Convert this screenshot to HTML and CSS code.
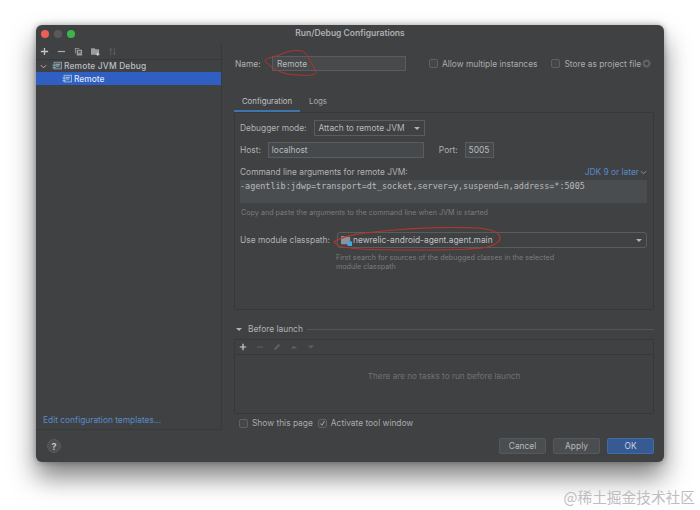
FILE: index.html
```html
<!DOCTYPE html>
<html lang="en">
<head>
<meta charset="utf-8">
<title>Run/Debug Configurations</title>
<link rel="stylesheet" href="styles.css">
</head>
<body>
<div class="window">
  <header class="titlebar">
    <div class="lights"><i class="light red"></i><i class="light grey"></i><i class="light green"></i></div>
    <div class="title">Run/Debug Configurations</div>
  </header>
  <div class="main">
    <aside class="sidebar">
      <div class="side-tools">
        <svg class="ic" viewBox="0 0 10 10"><path d="M5 1v8M1 5h8" stroke="#c4c6c8" stroke-width="1.400"/></svg>
        <svg class="ic" viewBox="0 0 10 10"><path d="M1 5h8" stroke="#a5a7a9" stroke-width="1.400"/></svg>
        <svg class="ic" viewBox="0 0 10 10"><path d="M1 1h5v1H2v5H1zM3 3h6v6.500H3z" fill="#9a9c9e"/><path d="M4.500 5h3M4.500 6.500h3" stroke="#45474a"/></svg>
        <svg class="ic" viewBox="0 0 10 10"><path d="M0 1.500h4l1 1h4v6H0z" fill="#9a9c9e"/><path d="M7.500 6v4M5.500 8h4" stroke="#d0d2d4"/></svg>
        <svg class="ic" viewBox="0 0 10 10"><path d="M3 9V2M1.500 3.500L3 1.500l1.500 2M7 1v7M5.500 6.500L7 8.500l1.500-2" stroke="#5f6163" fill="none"/></svg>
      </div>
      <div class="tree">
        <div class="node parent">
          <svg class="chev" viewBox="0 0 8 8"><path d="M1 2.500l3 3 3-3" stroke="#b4b6b8" stroke-width="1.100" fill="none"/></svg>
          <svg class="cfg" viewBox="0 0 12 12"><rect x="2.500" y="1.500" width="9" height="8" fill="#4d5a63" stroke="#8ea0ac"/><path d="M.5 5h4M.5 8h4" stroke="#8fb4cc"/><path d="M4.500 4h5M4.500 6h4" stroke="#aebcc6"/></svg>
          <span class="node-label">Remote JVM Debug</span>
        </div>
        <div class="node selected">
          <svg class="cfg" viewBox="0 0 12 12"><rect x="2.500" y="1.500" width="9" height="8" fill="#3f6cb8" stroke="#9ec1e8"/><path d="M.5 5h4M.5 8h4" stroke="#a8cdf0"/><path d="M4.500 4h5M4.500 6h4" stroke="#bcd6f0"/></svg>
          <span class="node-label">Remote</span>
        </div>
      </div>
      <a class="templates">Edit configuration templates...</a>
    </aside>
    <section class="content">
      <div class="name-row">
        <label class="lbl name-lbl">Name:</label>
        <div class="field name-field">Remote</div>
        <span class="check-item allow"><i class="box"></i>Allow multiple instances</span>
        <span class="check-item store"><i class="box"></i>Store as project file
          <svg class="gear" viewBox="0 0 10 10"><circle cx="5" cy="5" r="3" fill="none" stroke="#67696b" stroke-width="1.600"/><circle cx="5" cy="5" r="4.400" fill="none" stroke="#67696b" stroke-width="1" stroke-dasharray="1.400 1.400"/></svg>
        </span>
      </div>
      <nav class="tabs">
        <span class="tab active">Configuration</span>
        <span class="tab">Logs</span>
      </nav>
      <div class="panel">
        <div class="row mode-row">
          <span class="lbl">Debugger mode:</span>
          <div class="field select mode-select">Attach to remote JVM<i class="caret"></i></div>
        </div>
        <div class="row host-row">
          <span class="lbl">Host:</span>
          <div class="field host-field">localhost</div>
          <span class="lbl port-lbl">Port:</span>
          <div class="field port-field">5005</div>
        </div>
        <div class="cmd-head">
          <span class="lbl">Command line arguments for remote JVM:</span>
          <a class="jdk">JDK 9 or later<svg class="jdk-chev" viewBox="0 0 8 8"><path d="M1 2.500l3 3 3-3" stroke="#8a9cb0" fill="none"/></svg></a>
        </div>
        <div class="cmd">-agentlib:jdwp=transport=dt_socket,server=y,suspend=n,address=*:5005</div>
        <p class="hint copy">Copy and paste the arguments to the command line when JVM is started</p>
        <div class="row module-row">
          <span class="lbl">Use module classpath:</span>
          <div class="field select module-select">
            <svg class="mod" viewBox="0 0 12 12"><path d="M0 1h4l1 1h5v8H0z" fill="#8b949c"/><rect x="7" y="7" width="5" height="5" fill="#3fa9e0"/></svg>
            <span class="module-name">newrelic-android-agent.agent.main</span><i class="caret"></i>
          </div>
        </div>
        <p class="hint module-hint">First search for sources of the debugged classes in the selected<br>module classpath</p>
      </div>
      <div class="before-head">
        <i class="down"></i><span class="lbl before-title">Before launch</span><span class="rule"></span>
      </div>
      <div class="tasks">
        <div class="task-tools">
          <svg class="ic small" viewBox="0 0 10 10"><path d="M5 1v8M1 5h8" stroke="#d0d2d4" stroke-width="1.500"/></svg>
          <svg class="ic small" viewBox="0 0 10 10"><path d="M1 5h8" stroke="#5c5e60" stroke-width="1.400"/></svg>
          <svg class="ic small" viewBox="0 0 10 10"><path d="M1 9l1-3 5-5 2 2-5 5z" fill="#5c5e60"/></svg>
          <svg class="ic small" viewBox="0 0 10 10"><path d="M1 7l4-4 4 4z" fill="#5c5e60"/></svg>
          <svg class="ic small" viewBox="0 0 10 10"><path d="M1 3l4 4 4-4z" fill="#5c5e60"/></svg>
        </div>
        <div class="task-empty">There are no tasks to run before launch</div>
      </div>
      <div class="show-row">
        <span class="check-item"><i class="box"></i>Show this page</span>
        <span class="check-item"><i class="box checked"><svg viewBox="0 0 10 10"><path d="M2 5l2.200 2.500L8 1.500" stroke="#c4c6c8" stroke-width="1.100" fill="none"/></svg></i>Activate tool window</span>
      </div>
    </section>
  </div>
  <footer class="footer">
    <span class="help">?</span>
    <div class="buttons">
      <button class="btn">Cancel</button>
      <button class="btn">Apply</button>
      <button class="btn primary">OK</button>
    </div>
  </footer>
  <svg class="mark mark-name" viewBox="0 0 53 26"><path d="M27 1C33 0 38 0 41 3c4 4 7 11 11 19 1 3-8 4-16 3-8 0-14-1-19-3C11 20 6 16 3 13 0 10 0 9 9 7c7-2 12-5 18-6" fill="none" stroke="#b5352c" stroke-width="1"/></svg>
  <svg class="mark mark-module" viewBox="0 0 168 24"><path d="M1 15C10 8 30 6 50 4 80 1 120 0 145 1c12 1 20 3 22 9 1 5-8 10-18 11-20 2-40 2-60 2-22 0-46 0-62-1C14 21 5 20 1 15z" fill="none" stroke="#b5352c" stroke-width="1.200"/></svg>
</div>
<div class="watermark">@稀土掘金技术社区</div>
</body>
</html>
```
FILE: styles.css
```css
* { box-sizing: border-box; }
html, body { margin: 0; height: 100%; }
body {
  width: 700px;
  height: 510px;
  background: #fff;
  overflow: hidden;
  position: relative;
  font-family: "Inter", "Liberation Sans", "Noto Sans CJK SC", sans-serif;
  font-size: 8.400px;
  color: #b4b6b8;
  padding: 25px 0 0 36px;
}
.window {
  position: relative;
  width: 628px;
  height: 437px;
  background: #3f4143;
  border-radius: 6px;
  box-shadow: 0 15px 26px rgba(0,0,0,.5), 0 0 6px rgba(0,0,0,.32);
  display: flex;
  flex-direction: column;
}
.titlebar {
  height: 18px;
  flex: none;
  position: relative;
  display: flex;
  align-items: center;
  justify-content: center;
}
.lights { position: absolute; left: 5px; top: 5px; display: flex; gap: 5px; }
.light { width: 8px; height: 8px; border-radius: 50%; display: block; }
.red { background: #ec5f57; }
.grey { background: #59595b; }
.green { background: #3cb64a; }
.title { font-weight: 600; font-size: 8.500px; color: #aeb0b2; position: relative; top: -1px; }
.main { flex: 1; display: flex; min-height: 0; }
.sidebar {
  width: 186px;
  flex: none;
  display: flex;
  flex-direction: column;
  border-right: 1px solid #38393b;
  border-bottom: 1px solid #38393b;
}
.side-tools {
  height: 17px;
  display: flex;
  align-items: center;
  padding-left: 4px;
  gap: 8px;
  border-bottom: 1px solid #37383a;
}
.ic { width: 9px; height: 9px; display: block; }
.tree { display: flex; flex-direction: column; }
.node {
  height: 12px;
  display: flex;
  align-items: center;
  padding-left: 4px;
  font-weight: 500;
  color: #bcbec0;
}
.parent { letter-spacing: .17px; }
.node.selected {
  height: 13px;
  background: #2f5fc2;
  color: #dfe6f2;
  padding-left: 26px;
}
.chev { width: 7px; height: 7px; margin-right: 5px; }
.cfg { width: 10px; height: 10px; margin-right: 2px; }
.node-label { white-space: nowrap; }
.templates {
  margin-top: auto;
  padding: 0 0 4px 7px;
  color: #5a8bc9;
}
.content { flex: 1; padding: 0 10px 0 12px; display: flex; flex-direction: column; min-width: 0; }
.lbl { color: #b0b2b4; white-space: nowrap; }
.field {
  height: 16px;
  background: #45494b;
  border: 1px solid #5a5d5f;
  color: #b8babc;
  display: flex;
  align-items: center;
  padding-left: 3px;
}
.name-row { display: flex; align-items: center; height: 15px; margin-top: 13px; }
.name-lbl { width: 38px; padding-left: 1px; }
.name-field { height: 15px; width: 134px; padding-left: 4px; background: #47494b; }
.check-item { display: inline-flex; align-items: center; color: #a9abad; white-space: nowrap; }
.box {
  width: 9px;
  height: 9px;
  border: 1px solid #5f6264;
  border-radius: 2px;
  background: #444648;
  margin-right: 4px;
  display: block;
  flex: none;
}
.box svg { display: block; width: 7px; height: 7px; }
.allow { margin-left: 23px; }
.store { margin-left: 14px; }
.gear { width: 9px; height: 9px; margin-left: 1px; }
.tabs { display: flex; margin-top: 21px; height: 20px; }
.tab { line-height: 18px; font-size: 7.800px; color: #a9abad; padding-left: 9px; }
.tab.active { width: 66px; text-align: center; padding: 0; color: #c0c2c4; border-bottom: 2px solid #3f74ad; }
.panel {
  height: 198px;
  border: 1px solid #37383a;
  padding: 7px 6px 0 5px;
}
.row { display: flex; align-items: center; }
.mode-row { height: 16px; }
.mode-select { width: 111px; margin-left: 8px; background: #3f4143; }
.caret {
  width: 0; height: 0;
  border-left: 3px solid transparent;
  border-right: 3px solid transparent;
  border-top: 3px solid #b0b2b4;
  margin-left: auto;
  margin-right: 4px;
}
.host-row { height: 16px; margin-top: 6px; }
.host-field { width: 156px; margin-left: 7px; }
.port-lbl { margin-left: 15px; }
.port-field { width: 29px; margin-left: 7px; }
.cmd-head { display: flex; justify-content: space-between; align-items: center; margin-top: 8px; height: 12px; }
.jdk { color: #5a8bc9; display: inline-flex; align-items: center; }
.jdk-chev { width: 7px; height: 7px; margin-left: 1px; }
.cmd {
  height: 23px;
  background: #4a4d4f;
  margin-top: 2px;
  font-family: "DejaVu Sans Mono", "Liberation Mono", monospace;
  font-size: 8.440px;
  line-height: 12px;
  color: #b8babc;
  white-space: nowrap;
}
.hint { margin: 0; color: #7b7d7f; font-size: 7.200px; line-height: 9px; }
.copy { margin-top: 5px; padding-left: 1px; }
.module-row { margin-top: 15px; height: 16px; }
.module-select { width: 311px; margin-left: 7px; background: #3f4143; border-radius: 3px; }
.mod { width: 11px; height: 11px; margin-right: 1px; flex: none; }
.module-name { color: #c0c2c4; }
.module-hint { margin: 5px 0 0 96px; }
.before-head { display: flex; align-items: center; height: 12px; margin-top: 13px; }
.down {
  width: 0; height: 0;
  border-left: 3px solid transparent;
  border-right: 3px solid transparent;
  border-top: 3px solid #b0b2b4;
  margin-left: 2px;
  margin-right: 6px;
}
.rule { flex: 1; height: 1px; background: #525456; margin-left: 4px; }
.tasks { height: 75px; border: 1px solid #37383a; margin-top: 4px; display: flex; flex-direction: column; }
.task-tools {
  height: 15px;
  display: flex;
  align-items: center;
  padding-left: 4px;
  gap: 9px;
  border-bottom: 1px solid #37383a;
  flex: none;
}
.small { width: 8px; height: 8px; }
.task-empty { flex: 1; display: flex; align-items: center; justify-content: center; font-size: 8.200px; color: #707274; padding-bottom: 16px; }
.show-row { display: flex; align-items: center; height: 12px; margin-top: 3px; padding-left: 5px; gap: 5px; }
.footer { height: 32px; flex: none; display: flex; align-items: center; justify-content: space-between; padding: 0 10px 0 11px; }
.help {
  width: 14px; height: 14px;
  border-radius: 50%;
  background: #4e5052;
  border: 1px solid #58595b;
  display: flex;
  align-items: center;
  justify-content: center;
  font-weight: 700;
  font-size: 9px;
  color: #c4c6c8;
}
.buttons { display: flex; gap: 7px; }
.btn {
  width: 47px;
  height: 16px;
  border: 1px solid #56595b;
  border-radius: 2px;
  background: #4b4e50;
  color: #b8babc;
  font: inherit;
  padding: 0;
}
.primary { background: #365a91; border-color: #416ba6; color: #c8d4e6; }
.mark { position: absolute; }
.mark-name { left: 228px; top: 25px; width: 53px; height: 26px; }
.mark-module { left: 297px; top: 202px; width: 168px; height: 24px; }
.watermark {
  position: absolute;
  right: 5px;
  bottom: 3px;
  font-family: "Noto Sans CJK SC", sans-serif;
  font-size: 14.700px;
  color: #bdbec0;
  white-space: nowrap;
}
```
